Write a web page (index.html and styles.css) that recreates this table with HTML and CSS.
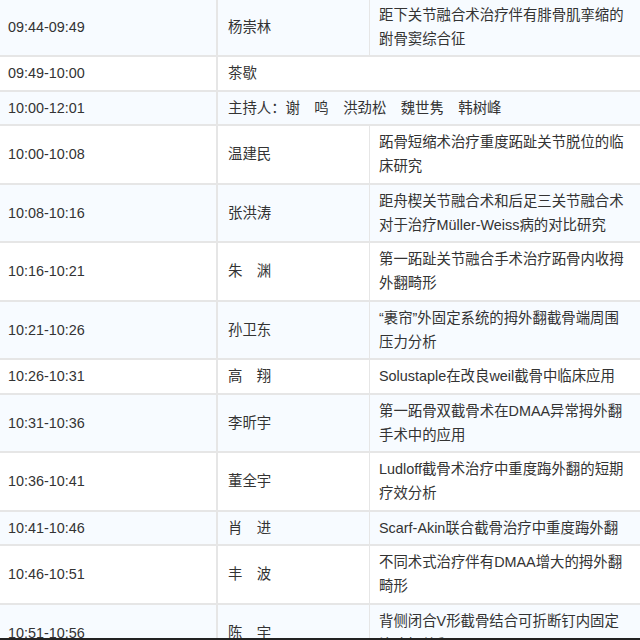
FILE: index.html
```html
<!DOCTYPE html>
<html lang="zh-CN">
<head>
<meta charset="utf-8">
<title>日程</title>
<link rel="stylesheet" href="styles.css">
</head>
<body>
<table class="agenda">
  <colgroup>
    <col class="c-time">
    <col class="c-name">
    <col class="c-topic">
  </colgroup>
  <tbody>
    <tr class="alt"><td class="time">09:44-09:49</td><td class="name">杨崇林</td><td class="topic">距下关节融合术治疗伴有腓骨肌挛缩的跗骨窦综合征</td></tr>
    <tr><td class="time">09:49-10:00</td><td class="name" colspan="2">茶歇</td></tr>
    <tr class="alt"><td class="time">10:00-12:01</td><td class="name" colspan="2">主持人：谢　鸣　洪劲松　魏世隽　韩树峰</td></tr>
    <tr><td class="time">10:00-10:08</td><td class="name">温建民</td><td class="topic">跖骨短缩术治疗重度跖趾关节脱位的临床研究</td></tr>
    <tr class="alt"><td class="time">10:08-10:16</td><td class="name">张洪涛</td><td class="topic">距舟楔关节融合术和后足三关节融合术对于治疗Müller-Weiss病的对比研究</td></tr>
    <tr><td class="time">10:16-10:21</td><td class="name">朱　渊</td><td class="topic">第一跖趾关节融合手术治疗跖骨内收拇外翻畸形</td></tr>
    <tr class="alt"><td class="time">10:21-10:26</td><td class="name">孙卫东</td><td class="topic">“裹帘”外固定系统的拇外翻截骨端周围压力分析</td></tr>
    <tr><td class="time">10:26-10:31</td><td class="name">高　翔</td><td class="topic">Solustaple在改良weil截骨中临床应用</td></tr>
    <tr class="alt"><td class="time">10:31-10:36</td><td class="name">李昕宇</td><td class="topic">第一跖骨双截骨术在DMAA异常拇外翻手术中的应用</td></tr>
    <tr><td class="time">10:36-10:41</td><td class="name">董全宇</td><td class="topic">Ludloff截骨术治疗中重度踇外翻的短期疗效分析</td></tr>
    <tr class="alt"><td class="time">10:41-10:46</td><td class="name">肖　进</td><td class="topic">Scarf-Akin联合截骨治疗中重度踇外翻</td></tr>
    <tr><td class="time">10:46-10:51</td><td class="name">丰　波</td><td class="topic">不同术式治疗伴有DMAA增大的拇外翻畸形</td></tr>
    <tr class="alt"><td class="time">10:51-10:56</td><td class="name">陈　宇</td><td class="topic">背侧闭合V形截骨结合可折断钉内固定治疗拇外翻</td></tr>
  </tbody>
</table>
<div class="bottom-line"></div>
</body>
</html>
```

FILE: styles.css
```css
html, body {
  margin: 0;
  padding: 0;
  background: #ffffff;
}
body {
  font-family: "Liberation Sans", "Noto Sans CJK SC", sans-serif;
  font-size: 14.4px;
  color: #333333;
  overflow: hidden;
}
.agenda {
  width: 640px;
  margin-top: -3.5px;
  border-collapse: separate;
  border-spacing: 0;
  table-layout: fixed;
}
.c-time { width: 216px; }
.c-name { width: 153px; }
.c-topic { width: 271px; }
.agenda td {
  border-top: 2px solid #e6e6e6;
  padding: 4.25px 9px;
  line-height: 24px;
  vertical-align: middle;
  background: #ffffff;
}
.agenda tr.alt td {
  background: #f7fbff;
}
.agenda td.time {
  padding-left: 8px;
}
.agenda td.name {
  border-left: 2px solid #e6e6e6;
  padding-left: 10px;
}
.agenda td.topic {
  border-left: 1px solid #e6e6e6;
  padding-left: 9px;
  padding-right: 9px;
}
.bottom-line {
  position: fixed;
  left: 0;
  right: 0;
  bottom: 0;
  height: 2px;
  background: #222222;
}
```
